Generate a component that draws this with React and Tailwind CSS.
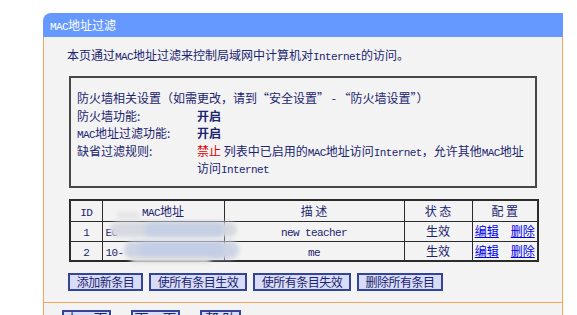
const L = ({ children }) => (
  <span className="font-['Liberation_Mono',monospace] text-[11px] leading-[0] tracking-[-0.6px]">{children}</span>
)

const rows = [
  { id: '1', mac: 'EC', desc: 'new teacher' },
  { id: '2', mac: '10-', desc: 'me' },
]

const actions = [
  { label: '添加新条目', w: 'w-[75px]' },
  { label: '使所有条目生效', w: 'w-[98px]' },
  { label: '使所有条目失效', w: 'w-[98px]' },
  { label: '删除所有条目', w: 'w-[86px]' },
]

const navs = [
  { label: '上一页', w: 'w-[49px]' },
  { label: '下一页', w: 'w-[49px]' },
  { label: '帮 助', w: 'w-[41px]' },
]

export default function App() {
  return (
    <div className="h-[315px] w-[577px] overflow-hidden bg-white pl-[43px] pt-[13px] font-['Noto_Sans_CJK_SC',sans-serif] text-[12px] text-[#1b2470]">
      <div className="w-[520px]">
        {/* title bar */}
        <div className="h-[24px] rounded-tl-[8px] bg-[#6699ff] pl-[7px] leading-[24px] text-white">
          <L>MAC</L>地址过滤
        </div>

        <div className="border-x border-b border-[#f2a65a] bg-[#f3f3f3] pb-[11px]">
          <p className="h-[25px] pl-[23px] pt-[11px] leading-[14px]">
            本页通过<L>MAC</L>地址过滤来控制局域网中计算机对<L>Internet</L>的访问。
          </p>

          {/* firewall settings */}
          <div className="ml-[25px] mt-[14px] grid h-[112px] w-[468px] grid-cols-[120px_1fr] grid-rows-[repeat(5,17.5px)] border-2 border-[#474747] pb-[9px] pl-[6px] pt-[11px] leading-[17.5px]">
            <div className="col-span-2 whitespace-nowrap">防火墙相关设置（如需更改，请到“安全设置” - “防火墙设置”）</div>
            <div>防火墙功能:</div>
            <div className="font-bold">开启</div>
            <div><L>MAC</L>地址过滤功能:</div>
            <div className="font-bold">开启</div>
            <div>缺省过滤规则:</div>
            <div className="whitespace-nowrap">
              <span className="text-[#e00000]">禁止</span> 列表中已启用的<L>MAC</L>地址访问<L>Internet</L>，允许其他<L>MAC</L>地址
            </div>
            <div />
            <div>访问<L>Internet</L></div>
          </div>

          {/* entries */}
          <div className="relative ml-[25px] mt-[11px] w-[468px]">
            <table className="w-[468px] table-fixed border-collapse border-2 border-[#2b2b2b] text-center leading-[16px]">
              <colgroup>
                <col className="w-[32px]" />
                <col className="w-[122px]" />
                <col className="w-[180px]" />
                <col className="w-[68px]" />
                <col className="w-[66px]" />
              </colgroup>
              <thead>
                <tr className="h-[21px]">
                  <td className="border border-[#2b2b2b] p-0"><L>ID</L></td>
                  <td className="border border-[#2b2b2b] p-0"><L>MAC</L>地址</td>
                  <td className="border border-[#2b2b2b] p-0">描 述</td>
                  <td className="border border-[#2b2b2b] p-0">状 态</td>
                  <td className="border border-[#2b2b2b] p-0">配 置</td>
                </tr>
              </thead>
              <tbody>
                {rows.map((r) => (
                  <tr key={r.id} className="h-[20px]">
                    <td className="border border-[#2b2b2b] p-0"><L>{r.id}</L></td>
                    <td className="border border-[#2b2b2b] p-0 pl-[3px] text-left"><L>{r.mac}</L></td>
                    <td className="border border-[#2b2b2b] p-0"><L>{r.desc}</L></td>
                    <td className="border border-[#2b2b2b] p-0">生效</td>
                    <td className="whitespace-nowrap border border-[#2b2b2b] p-0">
                      <a className="text-[#0000ee] underline">编辑</a>
                      <a className="ml-[12px] text-[#0000ee] underline">删除</a>
                    </td>
                  </tr>
                ))}
              </tbody>
            </table>
            {/* blurred-out addresses */}
            <div className="absolute left-[48px] top-[13px] h-[7px] w-[22px] rounded-full bg-[#e4e4e4] blur-[2px]" />
            <div className="absolute left-[41px] top-[23px] h-[15px] w-[127px] rounded-full bg-[#d6d9e0] blur-[2px]" />
            <div className="absolute left-[75px] top-[24px] h-[13px] w-[80px] rounded-full bg-[#c5cfe4] blur-[2px]" />
            <div className="absolute left-[55px] top-[42px] h-[18px] w-[115px] rounded-full bg-[#cdd4e3] blur-[2px]" />
            <div className="absolute left-[70px] top-[44px] h-[14px] w-[85px] rounded-full bg-[#c2cde6] blur-[2px]" />
            <div className="absolute left-[62px] top-[58px] h-[6px] w-[80px] rounded-full bg-[#dedede] blur-[2px]" />
          </div>

          <div className="ml-[24px] mt-[11px] flex gap-[6px]">
            {actions.map((a) => (
              <button
                key={a.label}
                className={`${a.w} h-[18px] border-2 border-[#33449a] bg-[#d8dcf6] text-center text-[12px] leading-[14px] tracking-[-0.5px] text-[#1b2470]`}
              >
                {a.label}
              </button>
            ))}
          </div>
        </div>

        {/* page navigation */}
        <div className="flex h-[40px] items-start gap-[20px] border-x border-[#f2a65a] bg-[#f3f3f3] pl-[18px] pt-[7px]">
          {navs.map((n) => (
            <div
              key={n.label}
              className={`${n.w} h-[22px] border-2 border-[#33449a] bg-[#d8dcf6] text-center text-[14px] leading-[12px] text-[#1b2470]`}
            >
              {n.label}
            </div>
          ))}
        </div>
      </div>
    </div>
  )
}
